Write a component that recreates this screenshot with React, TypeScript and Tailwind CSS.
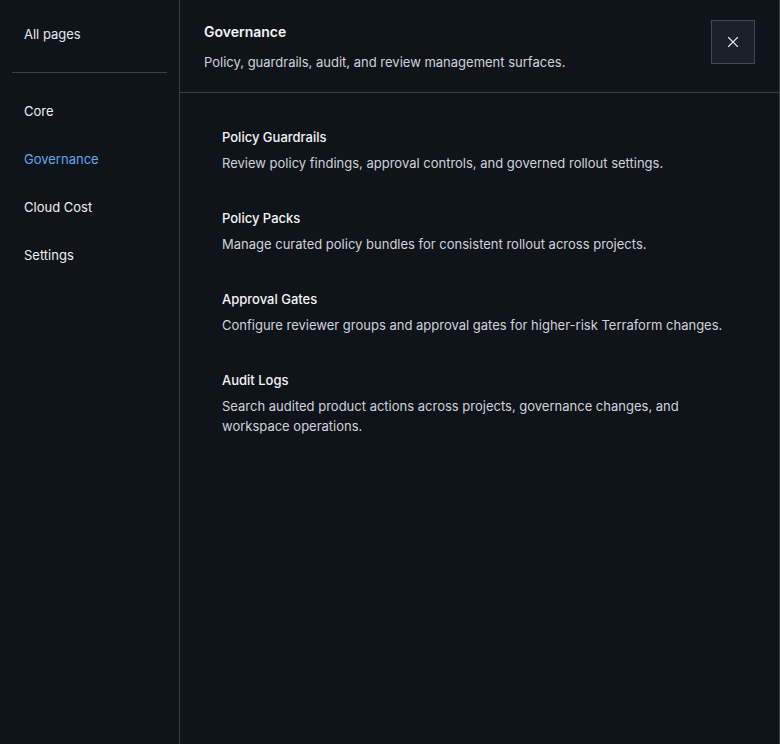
import { FC } from "react";
import { X } from "lucide-react";

interface IPage {
    title: string;
    description: string;
}

const sections = ["Core", "Governance", "Cloud Cost", "Settings"];

const pages: IPage[] = [
    {
        title: "Policy Guardrails",
        description: "Review policy findings, approval controls, and governed rollout settings.",
    },
    {
        title: "Policy Packs",
        description: "Manage curated policy bundles for consistent rollout across projects.",
    },
    {
        title: "Approval Gates",
        description: "Configure reviewer groups and approval gates for higher-risk Terraform changes.",
    },
    {
        title: "Audit Logs",
        description: "Search audited product actions across projects, governance changes, and workspace operations.",
    },
];

const App: FC = () => {
    const active = "Governance";

    return (
        <div
            className="flex h-[744px] w-[780px] border-r border-[#3a3e45] bg-[#0f131a] text-[13px] text-[#e6e8eb]"
            style={{ fontFamily: "Inter, 'Noto Sans', sans-serif" }}
        >
            {/* sidebar */}
            <aside className="flex w-[180px] shrink-0 flex-col border-r border-[#3a3e45] px-3 py-3">
                <button className="flex h-11 items-center px-3 pt-px text-left text-[#e6e8eb]">All pages</button>
                <div className="my-4 h-px bg-[#3a3e45]" />
                <nav className="flex flex-col gap-1">
                    {sections.map((s) => (
                        <button
                            key={s}
                            className={`flex h-11 items-center px-3 pt-px text-left ${s === active ? "text-[#5eaaf2]" : "text-[#eef0f2]"}`}
                        >
                            {s}
                        </button>
                    ))}
                </nav>
            </aside>

            {/* main */}
            <main className="flex min-w-0 flex-1 flex-col">
                <header className="flex items-start justify-between border-b border-[#3a3e45] px-6 py-5">
                    <div className="flex flex-col gap-2">
                        <h2 className="text-sm font-semibold leading-6 text-[#f3f4f6]">{active}</h2>
                        <p className="leading-5 text-[#cfd3d9]">Policy, guardrails, audit, and review management surfaces.</p>
                    </div>
                    <button className="flex h-11 w-11 items-center justify-center border border-[#44484f] bg-[#1c2028] text-[#e6e8eb]">
                        <X size={18} strokeWidth={1.5} />
                    </button>
                </header>

                <div className="flex flex-col gap-[11px] px-6 pt-[22px]">
                    {pages.map((p) => (
                        <div key={p.title} className="flex flex-col gap-1.5 px-[18px] py-3">
                            <p className="font-medium leading-5 text-[#f3f4f6]">{p.title}</p>
                            <p className="leading-5 text-[#cfd3d9]">{p.description}</p>
                        </div>
                    ))}
                </div>
            </main>
        </div>
    );
};

export default App;
